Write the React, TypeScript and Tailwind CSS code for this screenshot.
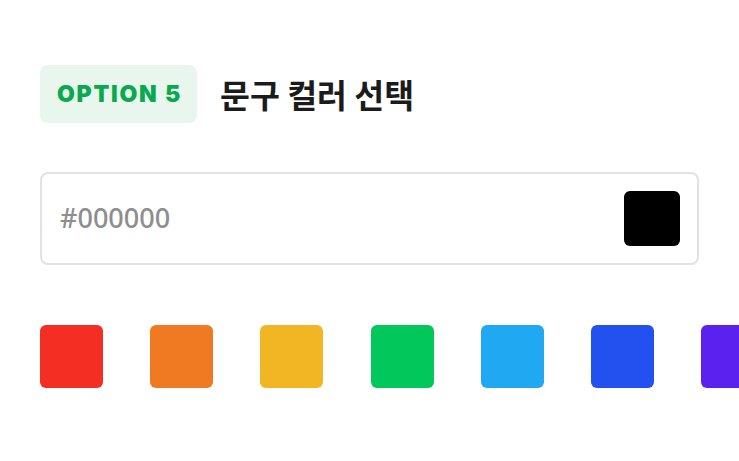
import React from 'react'

const swatches = ['#f42e23', '#f07a22', '#f2b624', '#02c75a', '#20a8f2', '#2351ef', '#5b22ef']

export default function App() {
  return (
    <div
      className="w-[739px] h-[461px] overflow-hidden bg-white pl-10 pt-[65px]"
      style={{ fontFamily: 'Inter, "Noto Sans CJK KR", sans-serif' }}
    >
      {/* Header */}
      <div className="flex items-center gap-[23px]">
        <div className="flex h-[58px] w-[157px] items-center justify-center rounded-lg bg-[#e8f6ee]">
          <span className="pl-[2px] text-[23px] font-black tracking-[1.8px] text-[#0aa84f]">OPTION 5</span>
        </div>
        <h1
          className="text-[32.5px] font-bold leading-none text-[#1b1b1b]"
          style={{ fontFamily: '"Noto Sans CJK KR", sans-serif' }}
        >
          문구 컬러 선택
        </h1>
      </div>

      {/* Input */}
      <div className="mt-[49px] flex h-[93px] w-[659px] items-center justify-between rounded-lg border-2 border-[#e2e2e2] pl-[18px] pr-[17px]">
        <span
          className="text-[27px] font-medium text-[#8e8e8e]"
          style={{ fontFamily: '"Noto Sans", sans-serif' }}
        >
          #000000
        </span>
        <div className="h-[55px] w-[56px] rounded-md bg-black" />
      </div>

      {/* Swatches */}
      <div className="mt-[60px] flex gap-[47.2px]">
        {swatches.map((c) => (
          <div key={c} className="h-[63px] w-[63px] shrink-0 rounded-md" style={{ backgroundColor: c }} />
        ))}
      </div>
    </div>
  )
}
